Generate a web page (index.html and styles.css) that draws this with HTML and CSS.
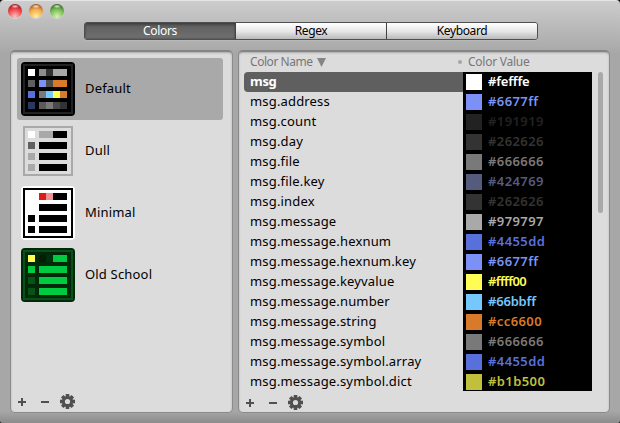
FILE: index.html
```
<!DOCTYPE html>
<html lang="en"><head><meta charset="utf-8"><title>Colors</title><link rel="stylesheet" href="styles.css"></head>
<body><main class="window">
<header class="titlebar"><i class="light red"></i><i class="light yellow"></i><i class="light green"></i></header>
<nav class="tabs"><button class="tab active">Colors</button><button class="tab">Regex</button><button class="tab">Keyboard</button></nav>
<div class="panels">
<section class="panel themes">
<div class="theme-list" id="themes"></div>
<footer class="tools"></footer>
</section>
<section class="panel colors">
<div class="heading"><span class="name-title">Color Name</span><svg class="sort" width="9" height="9"><path d="M0 0h9L4.5 9z"/></svg><i class="dot"></i><span class="value-title">Color Value</span></div>
<div class="table"><div class="rows" id="rows"></div><div class="scrollbar"></div></div>
<footer class="tools"></footer>
</section>
</div>
</main><script src="app.js"></script></body></html>
```
FILE: styles.css
```
* { box-sizing: border-box; }
body { margin: 0; background: #000; font: 13px/20px "Noto Sans", sans-serif; color: #000; overflow: hidden; }
.window { width: 620px; height: 423px; padding: 0 10px 10px; border-top: 1px solid #e5e5e5; border-radius: 4px 4px 2px 2px; background: linear-gradient(#cdcdcd 0, #bebebe 20px, #a7a7a7 53px, #a7a7a7 410px, #8c8c8c 100%); display: flex; flex-direction: column; }
.titlebar { height: 21px; display: flex; gap: 7px; padding: 3px 0 0; margin-left: -2px; flex: none; }
.light { width: 14px; height: 14px; border-radius: 50%; box-shadow: 0 1px 0 #d7d7d7; }
.red { background: radial-gradient(ellipse 4px 2px at 50% 17%, #f6cccc, transparent), radial-gradient(circle at 50% 90%, #ffc2c2 0, #f04a4d 50%, #9b1d22 85%); }
.yellow { background: radial-gradient(ellipse 4px 2px at 50% 17%, #f7e2cc, transparent), radial-gradient(circle at 50% 90%, #fff19a 0, #f4ad50 50%, #9a5626 85%); }
.green { background: radial-gradient(ellipse 4px 2px at 50% 17%, #d7edcc, transparent), radial-gradient(circle at 50% 90%, #d7f6a7 0, #7dbd5c 50%, #356a29 85%); }
.tabs { width: 454px; height: 18px; margin-left: 74px; display: flex; border: 1px solid #4d4f50; border-radius: 3px; overflow: hidden; box-shadow: 0 1px 0 #b8b8b8; flex: none; }
.tab { flex: 1; border: 0; border-left: 1px solid #424242; padding: 0; font: 12px/16px "Noto Sans", sans-serif; letter-spacing: -.35px; color: #000; background: linear-gradient(#fff, #e8e8e8 50%, #b9b9b9); }
.tab.active { color: #fff; border: 0; background: linear-gradient(#444, #626262 4px, #707070); box-shadow: inset 0 0 2px #333; }
.panels { display: flex; gap: 5px; margin-top: 10px; height: 363px; flex: none; }
.panel { border: 1px solid #8b8b8b; border-top: 2px solid #858585; border-radius: 5px; background: #dcdcdc; box-shadow: inset 0 1px 2px #aaa; display: flex; flex-direction: column; }
.themes { width: 223px; padding: 6px 9px 0 6px; }
.colors { width: 372px; padding: 0 6px 0 5px; }
.theme-list { height: 333px; }
.theme { display: flex; align-items: center; height: 62px; padding-left: 4px; gap: 10px; border-radius: 3px; letter-spacing: .18px; }
.theme.selected { background: #a9a9a9; }
.theme span { position: relative; top: -1px; }
.tools { display: flex; align-items: center; height: 23px; }
.colors .tools { padding-left: 1px; }
.tools svg { display: block; }
.heading { display: flex; align-items: center; height: 20px; padding-left: 6px; color: #777; font-size: 12px; }
.name-title { width: 63px; white-space: nowrap; letter-spacing: -.45px; flex: none; }
.sort { fill: #858585; margin-left: 4px; flex: none; }
.dot { width: 4px; height: 4px; border-radius: 50%; background: #a5a5a5; margin-left: 132px; flex: none; }
.value-title { margin-left: 6px; letter-spacing: -.25px; }
.table { display: flex; height: 319px; }
.rows { width: 348px; height: 319px; overflow: hidden; }
.row { display: flex; height: 20px; }
.name { width: 219px; padding-left: 6px; white-space: nowrap; letter-spacing: .17px; }
.row.selected .name { background: #5f5f5f; color: #fff; font-weight: 700; letter-spacing: -.3px; border-radius: 4px 0 0 4px; }
.value { width: 129px; padding-left: 3px; background: #000; display: flex; align-items: center; gap: 6px; font-weight: 600; letter-spacing: .4px; }
.value.wide { letter-spacing: -.2px; }
.value.widest { letter-spacing: -.65px; }
.value i { width: 16px; height: 16px; margin-top: 0; background: currentColor; }
.name b, .value b { font-weight: inherit; display: block; position: relative; top: -1px; }
.scrollbar { width: 5px; height: 141px; margin-left: 6px; border-radius: 3px; background: #a9a9a9; }
```
FILE: app.js
```
const colors = [
  ["msg", "#fefffe", "#ffffff", "wide"], ["msg.address", "#6677ff", "#7b91f8"], ["msg.count", "#191919", "#222222"], ["msg.day", "#262626", "#333333"],
  ["msg.file", "#666666", "#797979"], ["msg.file.key", "#424769", "#555b7c"], ["msg.index", "#262626", "#333333"], ["msg.message", "#979797", "#a9a9a9"],
  ["msg.message.hexnum", "#4455dd", "#5870dc"], ["msg.message.hexnum.key", "#6677ff", "#7b91f8"], ["msg.message.keyvalue", "#ffff00", "#fffc54", "widest"],
  ["msg.message.number", "#66bbff", "#75c8fb", "wide"], ["msg.message.string", "#cc6600", "#d87a29"], ["msg.message.symbol", "#666666", "#797979"],
  ["msg.message.symbol.array", "#4455dd", "#5870dc"], ["msg.message.symbol.dict", "#b1b500", "#c0c03d"]
];
document.getElementById("rows").innerHTML = colors.map(([name, hex, display, fit = ""], i) =>
  `<div class="row ${i === 0 ? "selected" : ""}"><div class="name"><b>${name}</b></div><div class="value ${fit}" style="color:${display}"><i></i><b>${hex}</b></div></div>`).join("");

const k = "#000";
const themes = [
  { name: "Default", outer: k, ring: "#222", bg: k, rows: [
    ["#fff", "#8e8e8e", "#333", "#a9a9a9", "#a9a9a9"], ["#5f5f5f", "#7b91f8", "#4b4b4b", "#d87a29", "#d87a29"],
    ["#5870dc", "#797979", "#75c8fb", "#fffc54", "#d87a29"], ["#2c375f", "#5b5b5b", "#797979", "#4a4a4a", "#333"]] },
  { name: "Dull", outer: "#dcdcdc", ring: "#a9a9a9", bg: "#dcdcdc", rows: [
    ["#fff", "#a9a9a9", "#a9a9a9", k, k], ["#5f5f5f", k, k, k, k], ["#a9a9a9", k, k, k, k], ["#a9a9a9", k, k, k, k]] },
  { name: "Minimal", outer: "#fff", ring: k, bg: "#fff", rows: [
    ["#fff", "#dc1c17", "#ee9291", k, k], ["#fff", k, k, k, k], [k, k, k, k, k], [k, k, k, k, k]] },
  { name: "Old School", outer: "#002809", ring: "#075217", bg: "#002809", rows: [
    ["#fffc54", "#071d02", "#00300d", "#00cb40", "#00cb40"], ["#00cb40", "#00cb40", "#00cb40", "#00cb40", "#00cb40"],
    ["#075217", "#00cb40", "#00cb40", "#00cb40", "#00cb40"], ["#075217", "#00cb40", "#00cb40", "#00cb40", "#00cb40"]] }
];
const cellX = [7, 18, 25, 32, 39];
document.getElementById("themes").innerHTML = themes.map((t, i) => {
  const cells = t.rows.map((row, y) => row.map((fill, x) => `<rect x="${cellX[x]}" y="${7 + y * 11}" width="7" height="7" fill="${fill}"/>`).join("")).join("");
  return `<div class="theme ${i === 0 ? "selected" : ""}"><svg width="54" height="54" shape-rendering="crispEdges"><rect width="54" height="54" rx="4" fill="${t.outer}" shape-rendering="auto"/><path fill="${t.ring}" d="M2 2h50v50H2z"/><path fill="${t.bg}" d="M4 4h46v46H4z"/>${cells}</svg><span>${t.name}</span></div>`;
}).join("");

const teeth = [0, 45, 90, 135, 180, 225, 270, 315].map(a => `<path d="M-1.8-7.5h3.6v3h-3.6z" transform="rotate(${a})"/>`).join("");
document.querySelectorAll(".tools").forEach(el => {
  el.innerHTML = `<svg width="60" height="21" fill="#505050"><path d="M1 11h3V8h2v3h3v2H6v3H4v-3H1zM24 11h8v2h-8z"/><g transform="translate(50.5 11.5)">${teeth}<circle r="4.1" fill="none" stroke="#505050" stroke-width="3"/></g></svg>`;
});
```
